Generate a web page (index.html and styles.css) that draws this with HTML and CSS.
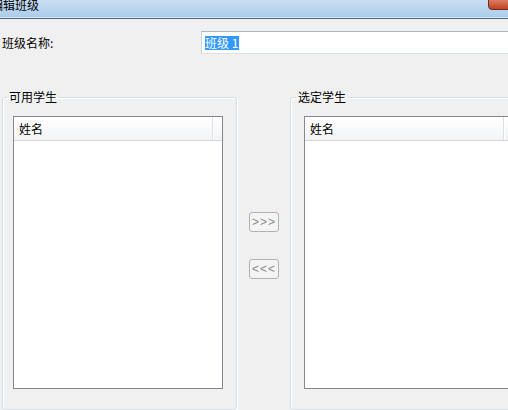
FILE: index.html
```html
<!DOCTYPE html>
<html lang="zh-CN">
<head>
    <meta charset="UTF-8">
    <meta name="viewport" content="width=device-width, initial-scale=1.0">
    <title>编辑班级</title>
    <link rel="stylesheet" href="styles.css">
</head>
<body>
    <div class="titlebar">
        <span class="title">编辑班级</span>
        <span class="close"></span>
    </div>

    <div class="name-row">
        <label class="name-label">班级名称:</label>
        <div class="name-field"><span class="selected">班级 1</span></div>
    </div>

    <div class="groups">
        <fieldset class="group group-left">
            <legend>可用学生</legend>
            <div class="list">
                <div class="list-head">
                    <div class="col">姓名</div>
                    <div class="filler"></div>
                </div>
            </div>
        </fieldset>

        <div class="arrows">
            <button class="arrow" disabled>&gt;&gt;&gt;</button>
            <button class="arrow" disabled>&lt;&lt;&lt;</button>
        </div>

        <fieldset class="group group-right">
            <legend>选定学生</legend>
            <div class="list">
                <div class="list-head">
                    <div class="col">姓名</div>
                    <div class="filler"></div>
                </div>
            </div>
        </fieldset>
    </div>
</body>
</html>
```

FILE: styles.css
```css
body {
    margin: 0;
    width: 508px;
    height: 410px;
    overflow: hidden;
    background: #f0f0f0;
    color: #000;
    font-family: "Noto Sans CJK SC", "Noto Sans", sans-serif;
    font-size: 12px;
}

/* window caption */
.titlebar {
    position: relative;
    height: 18px;
    overflow: hidden;
    background: linear-gradient(to bottom, #c9def1, #a9cced);
    border-bottom: 1px solid #566b80;
    box-shadow: inset 0 -1px 0 #d6e8f8;
}
.title {
    display: block;
    margin-left: -9px;
    margin-top: -2px;
    line-height: 14px;
    color: #000;
}
.close {
    position: absolute;
    top: -1px;
    right: -22px;
    width: 40px;
    height: 9px;
    background: linear-gradient(to bottom, #dc7d65, #c2401f);
    border: 1px solid #6b2f22;
    border-radius: 0 0 4px 4px;
}

/* class name row */
.name-row {
    display: flex;
    align-items: center;
    margin-top: 12px;
    height: 23px;
}
.name-label {
    flex: 0 0 201px;
    padding-left: 2px;
    box-sizing: border-box;
}
.name-field {
    flex: 0 0 auto;
    display: flex;
    align-items: center;
    width: 320px;
    height: 23px;
    box-sizing: border-box;
    padding-left: 3px;
    background: #fff;
    border: 1px solid;
    border-color: #a6b8c9 #cbd6e1 #d9e2ea #cbd6e1;
}
.selected {
    background: #3399ff;
    color: #fff;
    line-height: 14px;
    padding-right: 1px;
}

/* student lists */
.groups {
    display: flex;
    margin-top: 36px;
}
.group {
    flex: 0 0 auto;
    box-sizing: border-box;
    width: 235px;
    height: 320px;
    margin: 0;
    padding: 12px 0 0 10px;
    border: 1px solid #d5dfe5;
    border-radius: 3px;
    box-shadow: inset 1px 1px 0 #fff, 1px 1px 0 #fff;
}
.group legend {
    padding: 0 2px;
    margin-left: -6px;
    line-height: 14px;
}
.group-left {
    margin-left: 2px;
}
.group-right {
    padding-left: 13px;
}
.group-right legend {
    margin-left: -8px;
}

.list {
    width: 210px;
    height: 273px;
    box-sizing: border-box;
    background: #fff;
    border: 1px solid #828790;
}
.group-right .list {
    width: 230px;
}
.list-head {
    display: flex;
    height: 24px;
    box-sizing: border-box;
    background: linear-gradient(to bottom, #fff, #f3f4f6);
    border-bottom: 1px solid #d5d5d5;
}
.col {
    width: 199px;
    box-sizing: border-box;
    padding-left: 5px;
    line-height: 23px;
    border-right: 1px solid #dcdfe3;
}
.filler {
    flex: 1;
    border-left: 1px solid #fff;
}

/* move buttons */
.arrows {
    flex: 0 0 53px;
    display: flex;
    flex-direction: column;
    align-items: center;
    gap: 27px;
    padding-top: 122px;
}
.arrow {
    width: 30px;
    height: 20px;
    padding: 0 0 0 1px;
    background: #f4f4f4;
    border: 1px solid #adb2b5;
    border-radius: 3px;
    color: #8a8a8a;
    font-family: "Liberation Sans", Arial, sans-serif;
    font-size: 12px;
    letter-spacing: 1px;
    line-height: 18px;
}
```
